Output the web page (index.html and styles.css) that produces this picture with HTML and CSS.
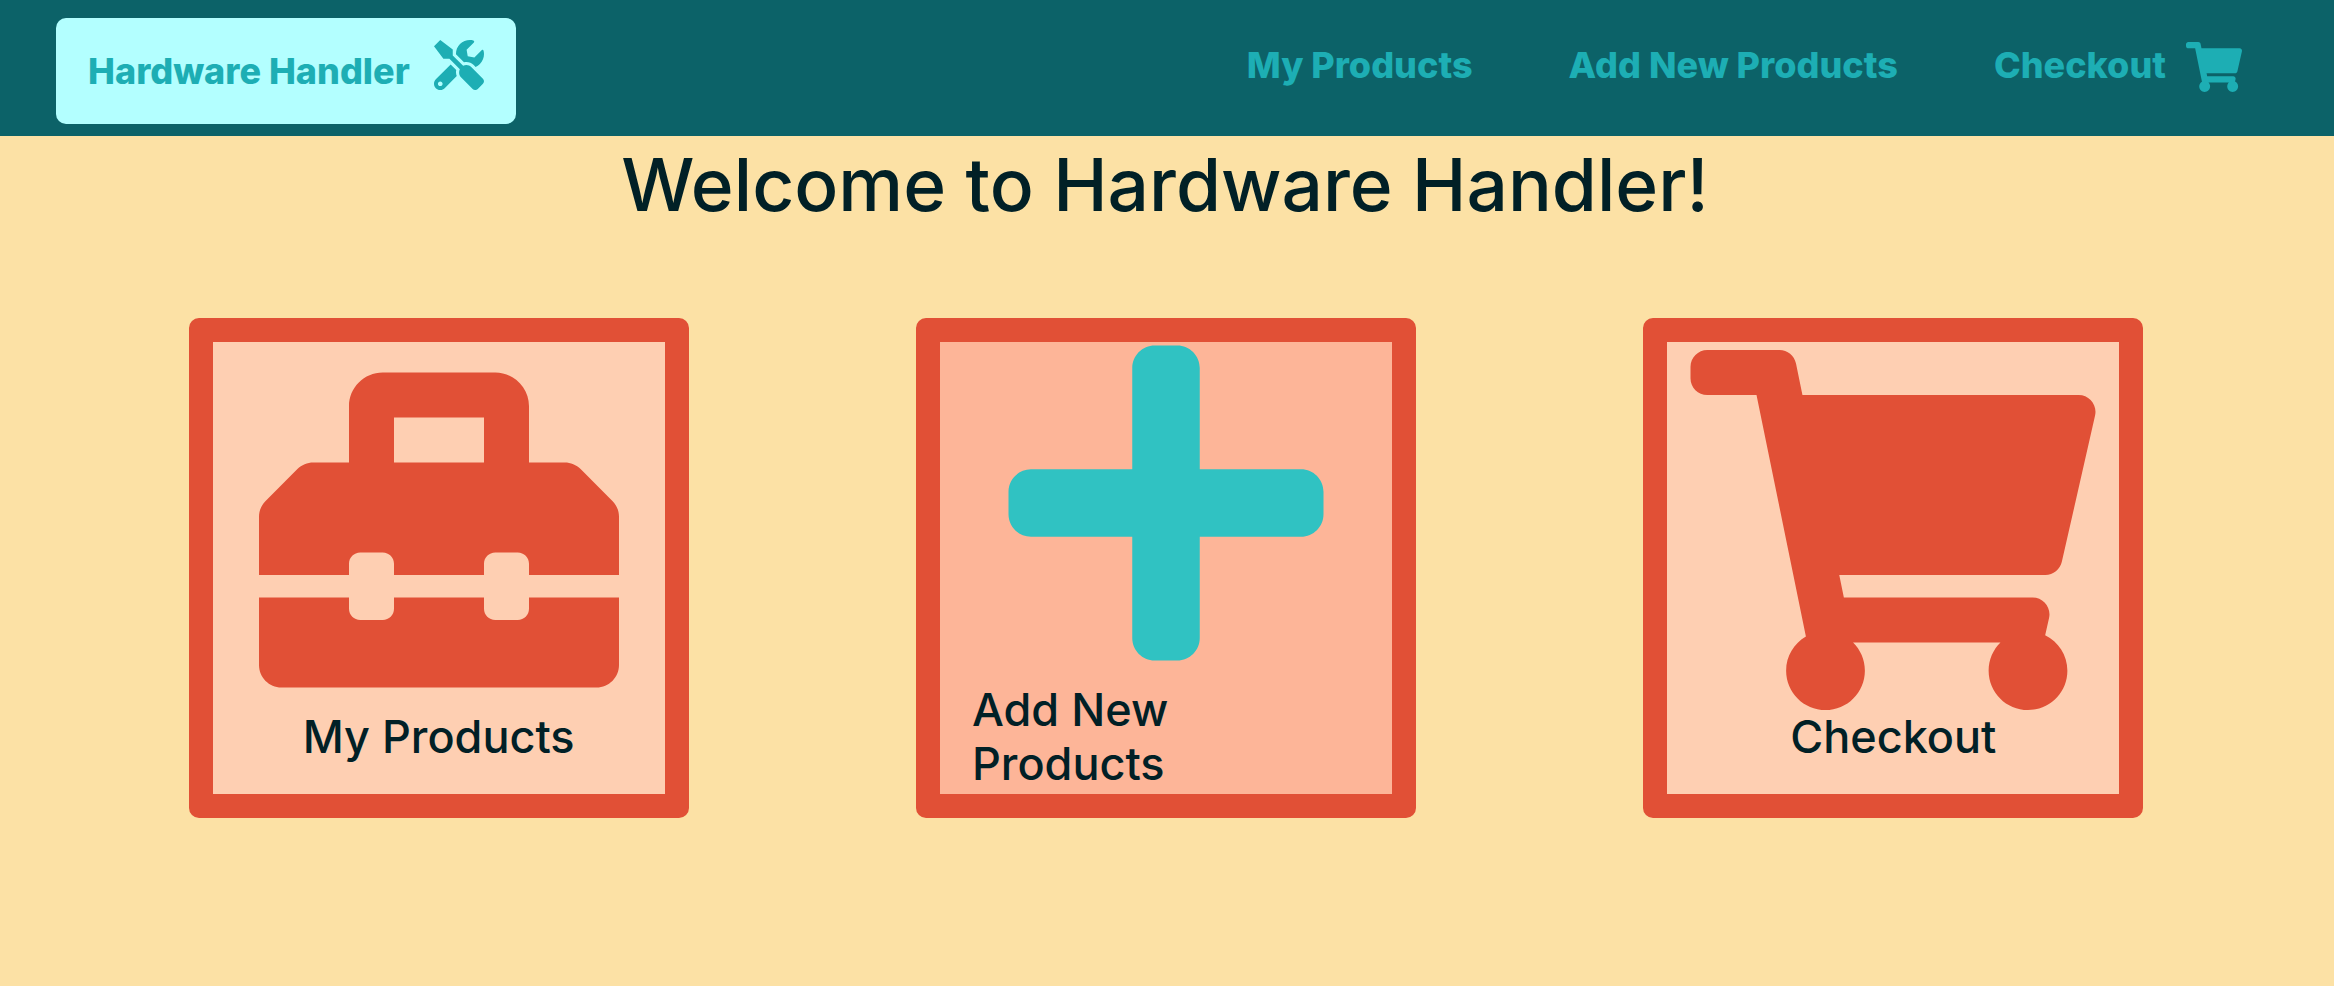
FILE: index.html
```html
<!DOCTYPE html>
<html lang="en">
<head>
<meta charset="utf-8">
<title>Hardware Handler</title>
<link rel="stylesheet" href="styles.css">
</head>
<body>
<svg class="sprite" aria-hidden="true">
  <symbol id="cart" viewBox="0 0 576 512"><path d="M528.12 301.319l47.273-208C578.806 78.301 567.391 64 551.99 64H159.208l-9.166-44.81C147.758 8.021 137.93 0 126.529 0H24C10.745 0 0 10.745 0 24v16c0 13.255 10.745 24 24 24h69.883l70.248 343.435C147.325 417.1 136 435.222 136 456c0 30.928 25.072 56 56 56s56-25.072 56-56c0-15.674-6.447-29.835-16.824-40h209.647C430.447 426.165 424 440.326 424 456c0 30.928 25.072 56 56 56s56-25.072 56-56c0-22.172-12.888-41.332-31.579-50.405l5.517-24.276c3.413-15.018-8.002-29.319-23.403-29.319H218.117l-6.545-32h293.145c11.206 0 20.92-7.754 23.403-18.681z"/></symbol>
</svg>
<header class="navbar">
  <a class="brand" href="#">
    <span>Hardware Handler</span>
    <svg class="nav-icon" viewBox="0 0 512 512" aria-hidden="true"><path d="M501.1 395.7L384 278.6c-23.1-23.1-57.6-27.6-85.4-13.9L192 158.1V96L64 0 0 64l96 128h62.1l106.6 106.6c-13.6 27.8-9.2 62.3 13.9 85.4l117.1 117.1c14.6 14.6 38.2 14.6 52.7 0l52.7-52.7c14.5-14.6 14.5-38.2 0-52.7zM331.7 225c28.3 0 54.9 11 74.9 31l19.4 19.4c15.8-6.9 30.8-16.5 43.8-29.5 37.1-37.1 49.7-89.3 37.9-136.7-2.2-9-13.5-12.1-20.1-5.5l-74.4 74.4-67.9-11.3L334 98.9l74.4-74.4c6.6-6.6 3.4-17.9-5.7-20.2-47.4-11.7-99.6.9-136.6 37.9-28.5 28.5-41.9 66.1-41.2 103.6l82.1 82.1c8.1-1.9 16.5-2.9 24.7-2.9zm-103.9 82l-56.7-56.7L18.7 402.8c-25 25-25 65.5 0 90.5s65.5 25 90.5 0l123.6-123.6c-7.6-19.9-9.9-41.6-5-62.7zM64 472c-13.2 0-24-10.8-24-24 0-13.3 10.7-24 24-24s24 10.7 24 24c0 13.2-10.7 24-24 24z"/></svg>
  </a>
  <nav class="links">
    <a class="link" href="#"><span>My Products</span></a>
    <a class="link" href="#"><span>Add New Products</span></a>
    <a class="link" href="#"><span>Checkout</span> <svg class="nav-icon nav-icon-wide" aria-hidden="true"><use href="#cart"/></svg></a>
  </nav>
</header>
<main>
  <h1 class="title">Welcome to Hardware Handler!</h1>
  <div class="cards">
    <a class="card" href="#">
      <svg class="card-icon" viewBox="0 0 512 512" aria-hidden="true"><path d="M502.63 214.63l-45.25-45.25c-6-6-14.14-9.37-22.63-9.37H384V80c0-26.51-21.49-48-48-48H176c-26.51 0-48 21.49-48 48v80H77.25c-8.49 0-16.62 3.37-22.63 9.37L9.37 214.63c-6 6-9.37 14.14-9.37 22.63V320h128v-16c0-8.84 7.16-16 16-16h32c8.84 0 16 7.16 16 16v16h128v-16c0-8.84 7.16-16 16-16h32c8.84 0 16 7.16 16 16v16h128v-82.75c0-8.48-3.37-16.62-9.37-22.62zM320 160H192V96h128v64zm64 208c0 8.84-7.16 16-16 16h-32c-8.84 0-16-7.16-16-16v-16H192v16c0 8.84-7.16 16-16 16h-32c-8.84 0-16-7.16-16-16v-16H0v96c0 17.67 14.33 32 32 32h448c17.67 0 32-14.33 32-32v-96H384v16z"/></svg>
      <span class="card-label">My Products</span>
    </a>
    <a class="card card-active" href="#">
      <svg class="card-icon" viewBox="0 0 448 512" aria-hidden="true"><path d="M416 208H272V64c0-17.67-14.33-32-32-32h-32c-17.67 0-32 14.33-32 32v144H32c-17.67 0-32 14.33-32 32v32c0 17.67 14.33 32 32 32h144v144c0 17.67 14.33 32 32 32h32c17.67 0 32-14.33 32-32V304h144c17.67 0 32-14.33 32-32v-32c0-17.67-14.33-32-32-32z"/></svg>
      <span class="card-label">Add New Products</span>
    </a>
    <a class="card" href="#">
      <svg class="card-icon card-icon-wide" aria-hidden="true"><use href="#cart"/></svg>
      <span class="card-label">Checkout</span>
    </a>
  </div>
</main>
</body>
</html>
```
FILE: styles.css
```css
* { box-sizing: border-box; }
body {
  margin: 0;
  min-height: 100vh;
  background: #fce1a5;
  color: #012026;
  font-family: Inter, "Liberation Sans", sans-serif;
}
a { text-decoration: none; color: inherit; }
svg { fill: currentColor; flex: none; }
.sprite { display: none; }
.navbar {
  display: flex;
  justify-content: space-between;
  align-items: flex-start;
  padding: 18px 92px 12px 56px;
  background: #0c6268;
  color: #1daeb4;
  font-size: 36px;
  font-weight: 800;
  line-height: 46px;
}
.brand {
  display: flex;
  gap: 24px;
  padding: 22px 32px;
  border-radius: 10px;
  background: #b3ffff;
}
.brand span { padding: 8px 0; }
.nav-icon { width: 50px; height: 50px; }
.nav-icon-wide { width: 56px; }
.links { display: flex; gap: 96px; padding-top: 24px; }
.link { display: flex; gap: 20px; }
.title {
  margin: 0;
  padding-right: 4px;
  text-align: center;
  font-size: 73px;
  font-weight: 500;
  line-height: 98px;
}
.cards {
  display: grid;
  grid-template-columns: repeat(3, 1fr);
  justify-items: center;
  padding: 84px 77px 0 75px;
}
.card {
  display: flex;
  flex-direction: column;
  align-items: center;
  justify-content: center;
  width: 500px;
  height: 500px;
  border: 24px solid #e15036;
  border-radius: 10px;
  background: #fecfb2;
}
.card-active { background: #fdb598; }
.card-icon { width: 360px; height: 360px; color: #e15036; }
.card-icon-wide { width: 406px; }
.card-active .card-icon { color: #30c2c2; }
.card-label {
  padding: 0 32px 22px;
  font-size: 45px;
  font-weight: 500;
  line-height: 54px;
}
```
